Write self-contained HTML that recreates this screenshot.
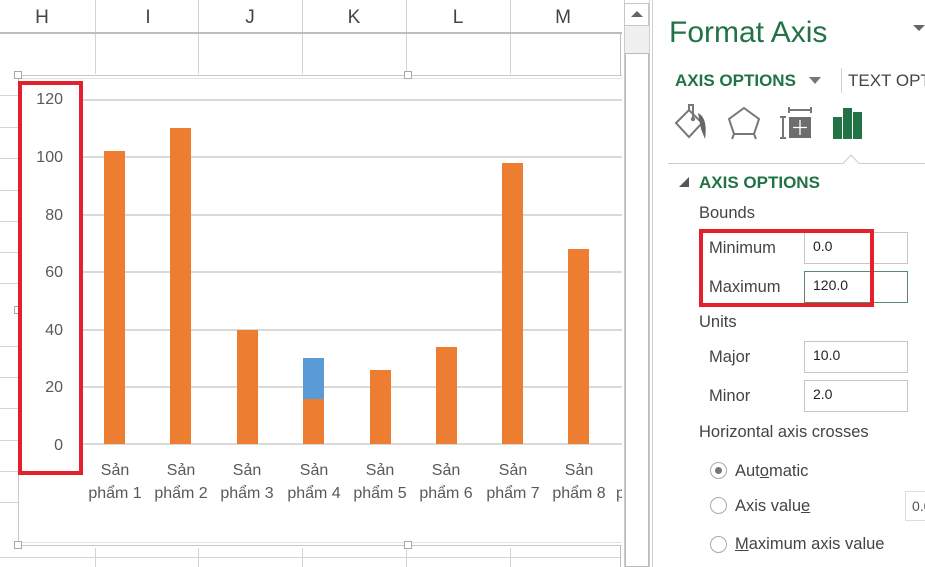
<!DOCTYPE html>
<html><head><meta charset="utf-8"><style>
*{margin:0;padding:0;box-sizing:border-box}
body{width:925px;height:567px;overflow:hidden;background:#fff;font-family:"Liberation Sans","DejaVu Sans",sans-serif;position:relative;color:#444}
.a{position:absolute}
.col{font-size:19px;color:#444;top:7px;width:60px;text-align:center}
.vl{width:1px;background:#d4d4d4}
.hl{height:1px;background:#d4d4d4}
.gl{left:82px;width:540px;height:2px;background:#d9d9d9}
.bar{background:#ed7d31;width:21px}
.yl{font-size:16px;color:#595959;width:50px;text-align:right;left:13px}
.xl{font-size:16px;color:#595959;width:70px;text-align:center;line-height:23px}
.h{width:8px;height:8px;border:1px solid #aaa;background:#fff}
.lab{font-size:16.5px;color:#444}
.inp{width:104px;height:32px;border:1px solid #c6c6c6;font-size:14px;color:#222;padding:5px 0 0 8px}
.rad{width:17px;height:17px;border:1px solid #aaa;border-radius:50%;background:#fff}
.g{color:#217346}
</style></head><body>
<div class="a col" style="left:12px">H</div>
<div class="a col" style="left:118px">I</div>
<div class="a col" style="left:220px">J</div>
<div class="a col" style="left:324px">K</div>
<div class="a col" style="left:428px">L</div>
<div class="a col" style="left:533px">M</div>
<div class="a vl" style="left:95px;top:0;height:32px"></div>
<div class="a vl" style="left:198px;top:0;height:32px"></div>
<div class="a vl" style="left:302px;top:0;height:32px"></div>
<div class="a vl" style="left:406px;top:0;height:32px"></div>
<div class="a vl" style="left:510px;top:0;height:32px"></div>
<div class="a" style="left:0;top:32px;width:622px;height:2px;background:#bdbdbd"></div>
<div class="a" style="left:620px;top:32px;width:1px;height:535px;background:#bdbdbd"></div>
<div class="a vl" style="left:95px;top:34px;height:40px"></div>
<div class="a vl" style="left:198px;top:34px;height:40px"></div>
<div class="a vl" style="left:302px;top:34px;height:40px"></div>
<div class="a vl" style="left:406px;top:34px;height:40px"></div>
<div class="a vl" style="left:510px;top:34px;height:40px"></div>
<div class="a vl" style="left:95px;top:548px;height:19px"></div>
<div class="a vl" style="left:198px;top:548px;height:19px"></div>
<div class="a vl" style="left:302px;top:548px;height:19px"></div>
<div class="a vl" style="left:406px;top:548px;height:19px"></div>
<div class="a vl" style="left:510px;top:548px;height:19px"></div>
<div class="a hl" style="left:0;top:95px;width:18px"></div>
<div class="a hl" style="left:0;top:127px;width:18px"></div>
<div class="a hl" style="left:0;top:158px;width:18px"></div>
<div class="a hl" style="left:0;top:190px;width:18px"></div>
<div class="a hl" style="left:0;top:221px;width:18px"></div>
<div class="a hl" style="left:0;top:252px;width:18px"></div>
<div class="a hl" style="left:0;top:283px;width:18px"></div>
<div class="a hl" style="left:0;top:346px;width:18px"></div>
<div class="a hl" style="left:0;top:377px;width:18px"></div>
<div class="a hl" style="left:0;top:408px;width:18px"></div>
<div class="a hl" style="left:0;top:440px;width:18px"></div>
<div class="a hl" style="left:0;top:471px;width:18px"></div>
<div class="a hl" style="left:0;top:502px;width:18px"></div>
<div class="a hl" style="left:0;top:557px;width:620px"></div>
<div class="a" style="left:18px;top:75px;width:604px;height:471px;border:1px solid #c8c8c8;border-right:none;background:#fff"></div>
<div class="a hl" style="left:18px;top:78px;width:604px;background:#e2e2e2"></div>
<div class="a hl" style="left:18px;top:542px;width:604px;background:#e2e2e2"></div>
<div class="a gl" style="top:99px"></div>
<div class="a gl" style="top:156px"></div>
<div class="a gl" style="top:214px"></div>
<div class="a gl" style="top:271px"></div>
<div class="a gl" style="top:329px"></div>
<div class="a gl" style="top:386px"></div>
<div class="a gl" style="top:443px"></div>
<div class="a bar" style="left:104px;top:151px;height:293px"></div>
<div class="a bar" style="left:170px;top:128px;height:316px"></div>
<div class="a bar" style="left:237px;top:330px;height:114px"></div>
<div class="a bar" style="left:303px;top:358px;height:41px;background:#5b9bd5"></div>
<div class="a bar" style="left:303px;top:399px;height:45px"></div>
<div class="a bar" style="left:370px;top:370px;height:74px"></div>
<div class="a bar" style="left:436px;top:347px;height:97px"></div>
<div class="a bar" style="left:502px;top:163px;height:281px"></div>
<div class="a bar" style="left:568px;top:249px;height:195px"></div>
<div class="a yl" style="top:91px">120</div>
<div class="a yl" style="top:149px">100</div>
<div class="a yl" style="top:207px">80</div>
<div class="a yl" style="top:264px">60</div>
<div class="a yl" style="top:322px">40</div>
<div class="a yl" style="top:379px">20</div>
<div class="a yl" style="top:437px">0</div>
<div class="a xl" style="left:80px;top:459px">Sản<br>phẩm 1</div>
<div class="a xl" style="left:146px;top:459px">Sản<br>phẩm 2</div>
<div class="a xl" style="left:212px;top:459px">Sản<br>phẩm 3</div>
<div class="a xl" style="left:279px;top:459px">Sản<br>phẩm 4</div>
<div class="a xl" style="left:345px;top:459px">Sản<br>phẩm 5</div>
<div class="a xl" style="left:411px;top:459px">Sản<br>phẩm 6</div>
<div class="a xl" style="left:478px;top:459px">Sản<br>phẩm 7</div>
<div class="a xl" style="left:544px;top:459px">Sản<br>phẩm 8</div>
<div class="a xl" style="left:616px;top:482px;width:6px;overflow:hidden;text-align:left">p</div>
<div class="a h" style="left:14px;top:71px"></div>
<div class="a h" style="left:404px;top:71px"></div>
<div class="a h" style="left:14px;top:306px"></div>
<div class="a h" style="left:14px;top:541px"></div>
<div class="a h" style="left:404px;top:541px"></div>
<div class="a" style="left:18px;top:81px;width:65px;height:394px;border:4px solid #e3202c"></div>
<div class="a" style="left:624px;top:0;width:26px;height:567px;background:#fff;border-left:1px solid #ccc;border-right:1px solid #ccc"></div>
<div class="a" style="left:624px;top:3px;width:25px;height:23px;border:1px solid #c6c6c6;background:#fff"></div>
<div class="a" style="left:631px;top:11px;width:0;height:0;border-left:6px solid transparent;border-right:6px solid transparent;border-bottom:6px solid #666"></div>
<div class="a" style="left:625px;top:26px;width:24px;height:27px;background:#f0f0f0"></div>
<div class="a" style="left:625px;top:53px;width:24px;height:514px;border:1px solid #bbb;background:#fff"></div>
<div class="a" style="left:652px;top:0;width:1px;height:567px;background:#d0d0d0"></div>
<div class="a g" style="left:669px;top:16px;font-size:30px">Format Axis</div>
<div class="a" style="left:913px;top:25px;border-left:6px solid transparent;border-right:6px solid transparent;border-top:6px solid #666"></div>
<div class="a g" style="left:675px;top:71px;font-size:17px;font-weight:bold">AXIS OPTIONS</div>
<div class="a" style="left:809px;top:77px;border-left:6px solid transparent;border-right:6px solid transparent;border-top:7px solid #777"></div>
<div class="a" style="left:841px;top:68px;width:1px;height:25px;background:#d0d0d0"></div>
<div class="a" style="left:848px;top:71px;font-size:17px;color:#444;white-space:nowrap">TEXT OPT</div>
<svg class="a" style="left:660px;top:95px" width="265" height="72" viewBox="660 95 265 72">
<g fill="none" stroke="#777" stroke-width="2">
<path d="M676 123 L689 110 L702 123 L689 137 Z"/>
<path d="M689 110 L689 105 L693 105 L693 117"/>
<path d="M744 108 L759 119 L754 134 L734 134 L729 119 Z"/>
<path d="M734 134 L732 139 M754 134 L756 139"/>
<path d="M789 110 H811 M789 107 V113 M811 107 V113 M783 117 V138 M780 117 H786 M780 138 H786"/>
</g>
<path d="M698 113 Q708 118 705 139 L701 129 Z" fill="#666"/>
<circle cx="693" cy="119" r="2.2" fill="#777"/>
<rect x="789" y="117" width="22" height="21" fill="#6d6d6d"/>
<path d="M793 127.5 H807 M800 120 V135" stroke="#fff" stroke-width="1.3"/>
<rect x="833" y="117" width="9" height="22" fill="#217346"/>
<rect x="843" y="108" width="9" height="31" fill="#217346"/>
<rect x="853" y="112" width="9" height="27" fill="#217346"/>
<path d="M668 163.5 H843 L851 155 L859 163.5 H925" stroke="#ccc" stroke-width="1" fill="#fff"/>
</svg>
<div class="a" style="left:679px;top:177px;border-left:10px solid transparent;border-bottom:10px solid #555"></div>
<div class="a g" style="left:699px;top:173px;font-size:17px;font-weight:bold">AXIS OPTIONS</div>
<div class="a lab" style="left:699px;top:204px">Bounds</div>
<div class="a lab" style="left:709px;top:239px">Minimum</div>
<div class="a inp" style="left:804px;top:232px">0.0</div>
<div class="a lab" style="left:709px;top:278px">Maximum</div>
<div class="a inp" style="left:804px;top:271px;border-color:#5c8a6e">120.0</div>
<div class="a" style="left:699px;top:229px;width:175px;height:78px;border:4px solid #e3202c"></div>
<div class="a lab" style="left:699px;top:313px">Units</div>
<div class="a lab" style="left:709px;top:348px">Major</div>
<div class="a inp" style="left:804px;top:341px">10.0</div>
<div class="a lab" style="left:709px;top:387px">Minor</div>
<div class="a inp" style="left:804px;top:380px">2.0</div>
<div class="a lab" style="left:699px;top:423px">Horizontal axis crosses</div>
<div class="a rad" style="left:710px;top:462px"></div>
<div class="a" style="left:715px;top:467px;width:7px;height:7px;border-radius:50%;background:#777"></div>
<div class="a lab" style="left:735px;top:462px">Aut<u>o</u>matic</div>
<div class="a rad" style="left:710px;top:497px"></div>
<div class="a lab" style="left:735px;top:497px">Axis valu<u>e</u></div>
<div class="a" style="left:905px;top:491px;width:30px;height:30px;border:1px solid #ddd;font-size:14px;padding:6px 0 0 6px;color:#555">0.0</div>
<div class="a rad" style="left:710px;top:536px"></div>
<div class="a lab" style="left:735px;top:535px"><u>M</u>aximum axis value</div>
</body></html>
